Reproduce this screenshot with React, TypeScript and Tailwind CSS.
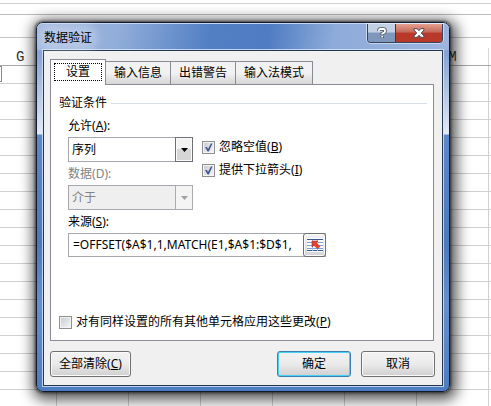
import { useState } from 'react';
import clsx from 'clsx';

const columns = ['H', 'I', 'J', 'K', 'L', 'M'];
const rows = Array.from({ length: 19 }, (_, i) => i);
const tabs = ['设置', '输入信息', '出错警告', '输入法模式'];

const Sheet = () => (
  <div className="h-full overflow-hidden font-['Liberation_Mono',monospace] text-sm leading-4 text-[#333]">
    <div className="h-1 border-b border-[#d0d0d0]" />
    <div className="h-[11px] border-b border-[#bcbcbc]" />
    <div className="h-[23px] border-b border-[#c4c4c4]" />
    <div className="flex h-7 border-b border-[#a8a8a8] pt-2.5">
      <div className="w-[57px] shrink-0 border-r border-[#d0d0d0] pl-4 pt-px">G</div>
      {columns.map((name) => (
        <div key={name} className="w-[72px] shrink-0 border-r border-[#d8d8d8] pt-px text-center">
          {name}
        </div>
      ))}
    </div>
    {rows.map((row) => (
      <div key={row} className="flex h-[18px] border-b border-[#d0d0d0]">
        <div className="w-[57px] shrink-0 border-r border-[#d0d0d0]">
          {row === 0 && <div className="h-4 w-0.5 border border-l-0 border-[#888]" />}
        </div>
        {columns.map((name) => (
          <div key={name} className="w-[72px] shrink-0 border-r border-[#d0d0d0]" />
        ))}
      </div>
    ))}
  </div>
);

interface CheckProps {
  id: string;
  label: string;
  accessKey: string;
  defaultChecked?: boolean;
}

const Check = ({ id, label, accessKey, defaultChecked }: CheckProps) => (
  <div className="flex items-center gap-1">
    <span className="grid size-[13px]">
      <input
        id={id}
        type="checkbox"
        defaultChecked={defaultChecked}
        className="peer col-start-1 row-start-1 size-[13px] appearance-none border border-[#8e8f8f] bg-linear-to-br from-[#c4c8d2] to-[#f8f8f8] shadow-[inset_0_0_0_1px_#f4f4f4]"
      />
      <svg
        viewBox="0 0 13 13"
        className="pointer-events-none invisible col-start-1 row-start-1 size-[13px] peer-checked:visible"
      >
        <path d="M3 6 L5 6 L6 8 L9 2.5 L10.5 2.5 L6.8 10.5 L5.6 10.5 Z" fill="#40568f" />
      </svg>
    </span>
    <label htmlFor={id} className="whitespace-nowrap">
      {label}(<u>{accessKey}</u>)
    </label>
  </div>
);

interface ComboProps {
  id: string;
  label: string;
  accessKey: string;
  options: string[];
  disabled?: boolean;
}

const Combo = ({ id, label, accessKey, options, disabled }: ComboProps) => (
  <div className={clsx('flex flex-col', disabled && 'text-[#838383]')}>
    <label htmlFor={id} className="h-[23px] pt-1">
      {label}({disabled ? accessKey : <u>{accessKey}</u>}):
    </label>
    <div className="grid h-[25px] w-[125px]">
      <select
        id={id}
        disabled={disabled}
        className={clsx(
          'col-start-1 row-start-1 appearance-none border border-[#a5a7ad] pl-[3px] outline-none',
          disabled ? 'bg-[#efefef] opacity-100' : 'bg-white',
        )}
      >
        {options.map((o) => (
          <option key={o}>{o}</option>
        ))}
      </select>
      <span
        className={clsx(
          'pointer-events-none col-start-1 row-start-1 flex w-[18px] items-center justify-center justify-self-end border',
          disabled
            ? 'border-[#a9abb0] bg-[#f4f4f4]'
            : 'border-[#6d6f74] bg-linear-to-b from-[#f2f2f2] from-50% to-[#d6d6d6] to-50% shadow-[inset_0_0_0_1px_#fafafa]',
        )}
      >
        <svg viewBox="0 0 7 4" className="h-1 w-[7px]">
          <path d="M0 0H7L3.5 4Z" fill={disabled ? '#a0a0a0' : '#000'} />
        </svg>
      </span>
    </div>
  </div>
);

// Grid with a red arrow pointing to the top left
const RangeIcon = () => (
  <svg viewBox="0 0 16 14" className="h-3.5 w-4">
    <rect width="16" height="14" fill="#fff" />
    <path d="M0 1.5H16" stroke="#35588f" />
    <path d="M0 4.5H16M0 7.5H16M0 10.5H16" stroke="#7fa0d6" />
    <path d="M0 12.5H16" stroke="#35588f" />
    <path d="M5.5 2V13M10.5 2V13" stroke="#a9c0e6" />
    <path d="M5 3H11L9.2 4.8L13 8.4L10.6 10.8L7 7.2L5 9Z" fill="#e5432c" stroke="#b02c1c" strokeWidth="0.6" />
  </svg>
);

const button =
  'h-[26px] rounded-[3px] border bg-linear-to-b from-[#f2f2f2] via-[#ebebeb] via-50% to-[#cfcfcf] text-center whitespace-nowrap';

const App = () => {
  const [active, setActive] = useState(0);

  return (
    <div className="relative h-screen overflow-hidden bg-white font-['Noto_Sans','Noto_Sans_CJK_SC',sans-serif] text-xs leading-4 text-black">
      <Sheet />

      <div
        role="dialog"
        aria-labelledby="dialog-title"
        className="absolute top-[22px] right-[41px] left-9 rounded-[7px] border border-[#101a2c] bg-[linear-gradient(180deg,#86a3d5_0px,#86a3d5_30px,#e2eaf6_111px,#5d89cb_112px,#4c79bd_220px,#6690cf_280px,#4e7cc0_100%)] shadow-[0_0_3px_1px_rgba(0,0,0,0.6),2px_3px_14px_5px_rgba(0,0,0,0.65)]"
      >
        {/* Title bar */}
        <div className="flex h-[27px] items-start justify-between rounded-t-md border-t border-[#c6d8f2] bg-[linear-gradient(100deg,#a3b9df_0%,#91add9_20%,#527fc4_42%,#4f7cc2_56%,#8eacda_72%,#9cb4de_100%)] pr-1.5 pl-[7px]">
          <h1
            id="dialog-title"
            className="mt-1.5 rounded-full bg-white/25 text-xs leading-4 shadow-[0_0_8px_6px_rgba(255,255,255,0.25)]"
          >
            数据验证
          </h1>
          <div className="flex h-[19px] rounded-b-[4px] border border-t-0 border-[#35435f] shadow-[0_0_0_1px_rgba(255,255,255,0.5)]">
            <button
              type="button"
              aria-label="帮助"
              className="flex w-7 items-center justify-center rounded-bl-[3px] border-r border-[#4a3440] bg-linear-to-b from-[#c3d0e3] from-45% to-[#7f97bb] to-50%"
            >
              <svg viewBox="0 0 10 12" className="h-3 w-2.5" fill="none">
                <path d="M2 4V3Q2 2 3.2 2H6.6Q8 2 8 3.3V4.5Q8 5.3 6.8 5.8L5.2 6.6V8M5.2 9V11" stroke="#4d5566" strokeWidth="3.4" />
                <path d="M2 4V3Q2 2 3.2 2H6.6Q8 2 8 3.3V4.5Q8 5.3 6.8 5.8L5.2 6.6V7.6M5.2 9V10.6" stroke="#fff" strokeWidth="1.8" />
              </svg>
            </button>
            <button
              type="button"
              aria-label="关闭"
              className="flex w-[46px] items-center justify-center rounded-br-[3px] bg-linear-to-b from-[#e5a090] via-[#c4685a] via-45% to-[#b8392a] to-50%"
            >
              <svg viewBox="0 0 12 10" className="h-2.5 w-3">
                <path
                  d="M1 0.7H4.2L6 2.7L7.8 0.7H11V2L8.3 5L11 8V9.3H7.8L6 7.3L4.2 9.3H1V8L3.7 5L1 2Z"
                  fill="#fff"
                  stroke="#4a4a5c"
                />
              </svg>
            </button>
          </div>
        </div>

        {/* Client area */}
        <div className="mx-1.5 mb-[5px] border border-[#26384f] bg-[#f0f0f0] pt-2 pr-[7px] pb-2 pl-1.5 shadow-[0_0_0_1px_rgba(215,230,250,0.8)]">
          <div role="tablist" className="flex items-end">
            {tabs.map((tab, i) => (
              <button
                key={tab}
                type="button"
                role="tab"
                aria-selected={active === i}
                onClick={() => setActive(i)}
                className={clsx(
                  'border border-[#898c95] whitespace-nowrap',
                  active === i
                    ? 'z-10 -mb-px h-[26px] border-b-0 bg-white px-[3px] pb-0.5'
                    : 'h-[23px] border-b-0 border-l-0 bg-linear-to-b from-[#f2f2f2] from-50% to-[#d6d6d6] px-2',
                )}
              >
                <span className={clsx(active === i && 'block border border-dotted border-black px-[11px]')}>
                  {tab}
                </span>
              </button>
            ))}
          </div>

          <div role="tabpanel" className="mr-px border border-[#898c95] bg-white pr-1.5 pb-2.5 pl-2">
            <div role="group" aria-labelledby="criteria">
              <div className="mt-2.5 flex items-center gap-1">
                <span id="criteria">验证条件</span>
                <span className="h-px flex-1 bg-[#d5dfe5]" />
              </div>

              <div className="mt-[3px] flex gap-[9px] pl-[9px]">
                <div>
                  <Combo id="allow" label="允许" accessKey="A" options={['序列', '任何值', '整数', '小数']} />
                  <Combo id="data" label="数据" accessKey="D" options={['介于', '未介于', '等于']} disabled />
                </div>
                <div className="flex flex-col gap-[7px] pt-[25px]">
                  <Check id="ignore-blank" label="忽略空值" accessKey="B" defaultChecked />
                  <Check id="in-cell" label="提供下拉箭头" accessKey="I" defaultChecked />
                </div>
              </div>

              <div className="pl-[9px]">
                <label htmlFor="source" className="block h-[23px] pt-1">
                  来源(<u>S</u>):
                </label>
                <div className="flex h-6 w-[258px] border border-[#a5a7ad]">
                  <input
                    id="source"
                    type="text"
                    defaultValue="=OFFSET($A$1,1,MATCH(E1,$A$1:$D$1,"
                    className="min-w-0 flex-1 pl-1 outline-none"
                  />
                  <button
                    type="button"
                    aria-label="选择区域"
                    className="-my-px -mr-px flex w-[23px] items-center justify-center rounded-[3px] border border-[#707070] bg-linear-to-b from-[#f4f4f4] to-[#d4d4d4] shadow-[inset_0_0_0_1px_#fafafa]"
                  >
                    <RangeIcon />
                  </button>
                </div>
              </div>
            </div>

            <div className="mt-[57px]">
              <Check id="apply-all" label="对有同样设置的所有其他单元格应用这些更改" accessKey="P" />
            </div>
          </div>

          <div className="mt-2.5 flex gap-2.5">
            <button type="button" className={clsx(button, 'w-[81px] border-[#707070] shadow-[inset_0_0_0_1px_#fafafa]')}>
              全部清除(<u>C</u>)
            </button>
            <button
              type="button"
              className={clsx(button, 'ml-auto w-[74px] border-[#3c7fb1] shadow-[inset_0_0_0_1px_#48d0f5]')}
            >
              确定
            </button>
            <button type="button" className={clsx(button, 'w-[74px] border-[#707070] shadow-[inset_0_0_0_1px_#fafafa]')}>
              取消
            </button>
          </div>
        </div>
      </div>
    </div>
  );
};

export default App;
